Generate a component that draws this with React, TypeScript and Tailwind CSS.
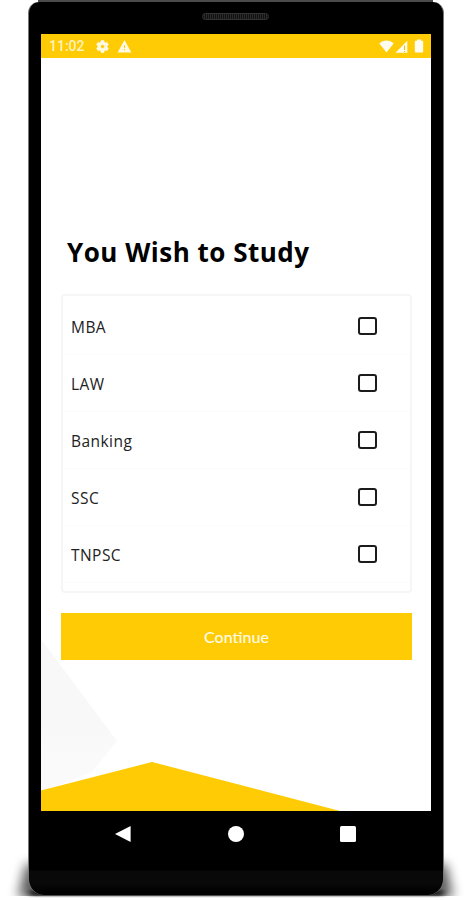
import React from "react";

const subjects: string[] = ["MBA", "LAW", "Banking", "SSC", "TNPSC"];

function StatusBar() {
  return (
    <header className="flex h-[24px] shrink-0 items-center bg-[#fecb04] pl-[8px] pr-[7px] text-white">
      <span className="w-[36px] whitespace-nowrap font-['Roboto',sans-serif] text-[14px] font-medium leading-none text-[#fff3bd]">
        11:02
      </span>
      <svg className="ml-[10px] h-[15px] w-[15px]" viewBox="0 0 24 24" fill="#fffae6" stroke="#fffae6" strokeWidth="1">
        <path d="M19.14 12.94c.04-.3.06-.61.06-.94s-.02-.64-.07-.94l2.03-1.58a.5.5 0 0 0 .12-.61l-1.92-3.32a.49.49 0 0 0-.59-.22l-2.39.96a7 7 0 0 0-1.62-.94l-.36-2.54a.48.48 0 0 0-.48-.41h-3.84a.47.47 0 0 0-.47.41l-.36 2.54c-.59.24-1.13.57-1.62.94l-2.39-.96a.48.48 0 0 0-.59.22L2.74 8.87a.47.47 0 0 0 .12.61l2.03 1.58a7 7 0 0 0 0 1.88l-2.03 1.58a.5.5 0 0 0-.12.61l1.92 3.32c.12.22.37.29.59.22l2.39-.96c.5.38 1.03.7 1.62.94l.36 2.54c.05.24.24.41.48.41h3.84c.24 0 .44-.17.47-.41l.36-2.54a7 7 0 0 0 1.62-.94l2.39.96c.22.08.47 0 .59-.22l1.92-3.32a.47.47 0 0 0-.12-.61zM12 15.2a3.2 3.2 0 1 1 0-6.4 3.2 3.2 0 0 1 0 6.4z" />
      </svg>
      <svg className="ml-[7px] h-[15px] w-[15px]" viewBox="0 0 24 24" fill="#fffae6">
        <path d="M1 21.500h22L12 1.500 1 21.500zm12-3.500h-2v-2h2v2zm0-4h-2v-4h2v4z" />
      </svg>
      <svg className="ml-auto h-[13px] w-[15px]" viewBox="0 0 15 13" fill="#fffdf0">
        <path d="M7.500 12.500L.3 3.600C2.300 1.700 4.800.6 7.500.6s5.200 1.100 7.200 3z" />
      </svg>
      <svg className="ml-[1px] h-[13px] w-[13px]" viewBox="0 0 13 13">
        <path d="M.5 12.800L12.300.8v12z" fill="#fffdf0" />
        <path d="M9.500 5.500v4.500M9.500 11v1" stroke="#e9bd20" strokeWidth="1.100" />
      </svg>
      <svg className="ml-[6px] h-[14px] w-[10px]" viewBox="0 0 10 14" fill="#fffdf0">
        <path d="M3 .5h4v1.200h1c.8 0 1.200.5 1.200 1.200v9.400c0 .8-.4 1.200-1.200 1.200H2c-.8 0-1.200-.4-1.200-1.200V2.900c0-.7.400-1.200 1.200-1.200h1z" />
      </svg>
    </header>
  );
}

function SubjectRow({ name }: { name: string }) {
  return (
    <label className="flex h-[57px] items-center justify-between border-b border-[#fcfcfc] pl-[8px] pr-[33px]">
      <span className="pt-[2px] font-['Open_Sans',sans-serif] text-[15.500px] leading-[20px] tracking-[0.450px] text-[#222]">
        {name}
      </span>
      <span className="h-[18px] w-[19px] rounded-[3px] border-2 border-[#1b1b1b] bg-white" />
    </label>
  );
}

function Backdrop() {
  return (
    <svg className="absolute bottom-0 left-0 h-[175px] w-[390px]" viewBox="0 0 390 175">
      <defs>
        <linearGradient id="facet" x1="0" y1="0" x2="0" y2="1">
          <stop offset="0" stopColor="#f8f8f8" />
          <stop offset="0.600" stopColor="#f8f8f8" />
          <stop offset="0.750" stopColor="#fafafa" />
          <stop offset="1" stopColor="#fafafa" />
        </linearGradient>
      </defs>
      <path d="M0 3L76 105L51 136L0 156z" fill="url(#facet)" />
      <path d="M0 154.500L111 126L299 175H0z" fill="#fecb04" />
    </svg>
  );
}

function NavBar() {
  return (
    <nav className="flex h-[46px] shrink-0 items-center justify-between pl-[74px] pr-[75px]">
      <svg className="h-[16px] w-[16px]" viewBox="0 0 16 16">
        <path d="M15.600 0v16L0 8z" fill="#fff" />
      </svg>
      <span className="h-[16px] w-[16px] rounded-full bg-white" />
      <span className="h-[16px] w-[16px] rounded-[1.500px] bg-white" />
    </nav>
  );
}

export default function App() {
  return (
    <main className="relative h-[900px] w-[471px] overflow-hidden bg-white">
      <svg className="absolute bottom-0 left-0 h-[60px] w-[471px]" viewBox="0 0 471 60">
        <defs>
          <filter id="soft" x="-10%" y="-50%" width="120%" height="200%">
            <feGaussianBlur stdDeviation="6 6" />
          </filter>
          <filter id="contact" x="-5%" y="-100%" width="110%" height="300%">
            <feGaussianBlur stdDeviation="3 1" />
          </filter>
          <clipPath id="floor">
            <path d="M0 0h471v56H0z" />
          </clipPath>
        </defs>
        <g clipPath="url(#floor)">
          <path d="M26 24h420l7 34H18z" fill="#000" opacity=".65" filter="url(#soft)" />
        </g>
        <path d="M30 50h413v6H30z" fill="#000" opacity=".7" filter="url(#contact)" />
      </svg>
      <div className="relative mx-auto h-[2px] w-[395px] bg-[#4b4b4b]" />
      <div className="relative ml-[28px] flex h-[893px] w-[416px] flex-col rounded-t-[11px] rounded-b-[16px] border-x border-[#777] bg-[linear-gradient(to_bottom,#000_0,#000_868px,#090909_869px,#090909_882px,#000_890px)] px-[12px]">
        <div className="flex h-[32px] shrink-0 items-center justify-center pb-[3px] pr-[1px]">
          <div className="h-[7px] w-[67px] rounded-full border border-[#333] bg-[repeating-linear-gradient(90deg,#111_0px,#111_1px,#292929_1px,#292929_2px)]" />
        </div>
        <section className="relative flex h-[777px] shrink-0 flex-col bg-white">
          <Backdrop />
          <div className="relative flex flex-col">
            <StatusBar />
            <h1 className="mt-[176px] whitespace-nowrap pl-[26px] font-['Open_Sans',sans-serif] text-[26px] font-bold leading-[36px] tracking-[0.500px] text-black">
              You Wish to Study
            </h1>
            <div className="ml-[20px] mt-[24px] h-[299px] w-[351px] rounded-[4px] border-2 border-[#f6f6f6] bg-white pt-[2px]">
              {subjects.map((name) => (
                <SubjectRow key={name} name={name} />
              ))}
            </div>
            <button className="ml-[20px] mt-[20px] h-[47px] w-[351px] bg-[#fecb04] font-['Lato',sans-serif] text-[16px] font-medium text-[#fffbe8]">
              Continue
            </button>
          </div>
        </section>
        <NavBar />
      </div>
    </main>
  );
}
